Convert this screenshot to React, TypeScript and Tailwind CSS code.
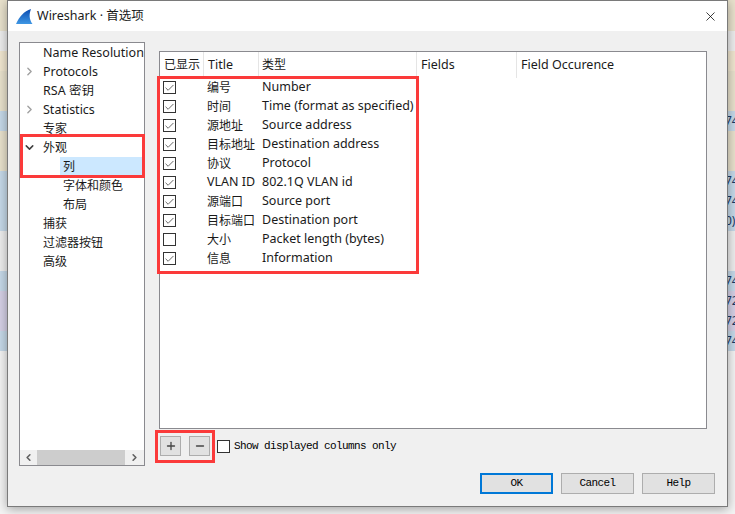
import React from "react";
import { ChevronDown, ChevronLeft, ChevronRight, Minus, Plus, X, Check } from "lucide-react";

const bands = [
  { h: "h-[31px]", bg: "bg-[#e9e2cd]", text: "" },
  { h: "h-[20px]", bg: "bg-[#eeeeee]", text: "" },
  { h: "h-[20px]", bg: "bg-[#f1e7d0]", text: "" },
  { h: "h-[40px]", bg: "bg-[#e9e2cd]", text: "" },
  { h: "h-[20px]", bg: "bg-[#c6d9e9]", text: "74" },
  { h: "h-[40px]", bg: "bg-[#e9e2cd]", text: "" },
  { h: "h-[20px]", bg: "bg-[#c6d9e9]", text: "74" },
  { h: "h-[20px]", bg: "bg-[#c6d9e9]", text: "74" },
  { h: "h-[20px]", bg: "bg-[#c6d9e9]", text: "0)" },
  { h: "h-[40px]", bg: "bg-[#eeeeee]", text: "" },
  { h: "h-[20px]", bg: "bg-[#c6d9e9]", text: "74" },
  { h: "h-[20px]", bg: "bg-[#d5d0e6]", text: "72" },
  { h: "h-[20px]", bg: "bg-[#d5d0e6]", text: "72" },
  { h: "h-[20px]", bg: "bg-[#c6d9e9]", text: "74" },
  { h: "h-[163px]", bg: "bg-[#f4f4f4]", text: "" },
];

const tree = [
  { label: "Name Resolution", level: 0 },
  { label: "Protocols", level: 0, arrow: "right" },
  { label: "RSA 密钥", level: 0 },
  { label: "Statistics", level: 0, arrow: "right" },
  { label: "专家", level: 0 },
  { label: "外观", level: 0, arrow: "down" },
  { label: "列", level: 1, selected: true },
  { label: "字体和颜色", level: 1 },
  { label: "布局", level: 1 },
  { label: "捕获", level: 0 },
  { label: "过滤器按钮", level: 0 },
  { label: "高级", level: 0 },
];

const columns = [
  { shown: true, title: "编号", type: "Number" },
  { shown: true, title: "时间", type: "Time (format as specified)" },
  { shown: true, title: "源地址", type: "Source address" },
  { shown: true, title: "目标地址", type: "Destination address" },
  { shown: true, title: "协议", type: "Protocol" },
  { shown: true, title: "VLAN ID", type: "802.1Q VLAN id" },
  { shown: true, title: "源端口", type: "Source port" },
  { shown: true, title: "目标端口", type: "Destination port" },
  { shown: false, title: "大小", type: "Packet length (bytes)" },
  { shown: true, title: "信息", type: "Information" },
];

// the chinese labels sit at 12px in the dialog, latin ones run slightly wider
const sizeOf = (s: string) => (/^[^\x00-\x7f]+$/.test(s) ? "text-[12px]" : "");

function CheckBox({ checked }: { checked: boolean }) {
  return (
    <span className="w-[13px] h-[13px] border border-[#333333] bg-white flex items-center justify-center">
      {checked && <Check size={12} strokeWidth={1.8} className="text-[#484848]" />}
    </span>
  );
}

function SharkFin() {
  return (
    <svg width="17" height="15" viewBox="0 0 17 15" className="shrink-0">
      <defs>
        <linearGradient id="fin" x1="0" y1="0" x2="0" y2="1">
          <stop offset="0" stopColor="#0a4bb0" />
          <stop offset="1" stopColor="#3f97e4" />
        </linearGradient>
      </defs>
      <path d="M0 15 C3 8 8 2 15 0 C13 5 13 10 16.5 15 Z" fill="url(#fin)" />
    </svg>
  );
}

function DialogButton({ label, primary }: { label: string; primary?: boolean }) {
  return (
    <button
      className={`w-[73px] h-[21px] bg-[#e1e1e1] flex items-center justify-center font-['Liberation_Mono',monospace] text-[11px] tracking-[-0.6px] text-black ${
        primary ? "border-2 border-[#0078d7]" : "border border-[#adadad]"
      }`}
    >
      {label}
    </button>
  );
}

export default function App() {
  return (
    <div className="relative w-[735px] h-[514px] overflow-hidden font-['Noto_Sans','Noto_Sans_CJK_SC',sans-serif] text-[12.5px] text-[#1a1a1a]">
      {/* things behind the dialog */}
      <div className="flex flex-col">
        {bands.map((b, i) => (
          <div
            key={i}
            className={`${b.h} ${b.bg} pl-[725px] text-[12px] leading-[20px] text-[#1c3a66] whitespace-nowrap overflow-hidden`}
          >
            {b.text}
          </div>
        ))}
      </div>

      {/* dialog */}
      <div className="absolute left-[7px] top-0 w-[721px] h-[507px] border border-[#7a7a7a] bg-[#f0f0f0] shadow-[0_2px_10px_rgba(0,0,0,0.35)] flex flex-col">
        <div className="h-[30px] bg-white flex items-center pl-[8px] pr-[9px] shrink-0">
          <SharkFin />
          <span className="ml-[4px] text-[12.5px]">Wireshark · 首选项</span>
          <X size={15} strokeWidth={1.2} className="ml-auto text-black" />
        </div>

        <div className="flex pl-[11px] pt-[11px]">
          {/* tree */}
          <div className="w-[126px] h-[424px] border border-[#8a8a8f] bg-white flex flex-col justify-between shrink-0">
            <div>
              {tree.map((t) => (
                <div
                  key={t.label}
                  className={`h-[19px] flex items-center whitespace-nowrap overflow-hidden ${t.level ? "pl-[43px]" : "pl-[23px]"}`}
                >
                  {t.arrow === "right" && (
                    <ChevronRight size={13} strokeWidth={2.6} className="-ml-[20px] mr-[7px] text-[#a0a0a0]" />
                  )}
                  {t.arrow === "down" && (
                    <ChevronDown size={13} strokeWidth={2.8} className="-ml-[20px] mr-[7px] text-[#404040]" />
                  )}
                  <span
                    className={`h-[19px] leading-[19px] ${sizeOf(t.label)} ${
                      t.selected ? "bg-[#cce8ff] w-[83px] pl-[3px] -ml-[3px]" : ""
                    }`}
                  >
                    {t.label}
                  </span>
                </div>
              ))}
            </div>
            <div className="h-[15px] bg-[#f0f0f0] flex items-center">
              <span className="w-[17px] flex justify-center">
                <ChevronLeft size={11} strokeWidth={3.5} className="text-[#606060]" />
              </span>
              <span className="w-[88px] h-[15px] bg-[#cdcdcd]" />
              <span className="w-[19px] flex justify-center">
                <ChevronRight size={11} strokeWidth={3.5} className="text-[#606060]" />
              </span>
            </div>
          </div>

          {/* columns */}
          <div className="ml-[14px] mt-[9px] flex flex-col">
            <div className="w-[548px] h-[378px] border border-[#8a8a8f] bg-white">
              <div className="h-[26px] flex items-center">
                <div className="w-[44px] h-full flex items-center pl-[4px] text-[12px] border-r border-[#e5e5e5]">已显示</div>
                <div className="w-[55px] h-full flex items-center pl-[4px] border-r border-[#e5e5e5]">Title</div>
                <div className="w-[158px] h-full flex items-center pl-[3px] text-[12px] border-r border-[#e5e5e5]">类型</div>
                <div className="w-[100px] h-full flex items-center pl-[4px] border-r border-[#e5e5e5]">Fields</div>
                <div className="pl-[4px]">Field Occurence</div>
              </div>
              {columns.map((c) => (
                <div key={c.type} className="h-[19px] flex items-center">
                  <div className="w-[44px] pl-[3px] flex items-center">
                    <CheckBox checked={c.shown} />
                  </div>
                  <div className={`w-[55px] pl-[3px] whitespace-nowrap ${sizeOf(c.title)}`}>{c.title}</div>
                  <div className="pl-[3px] whitespace-nowrap">{c.type}</div>
                </div>
              ))}
            </div>
            <div className="mt-[7px] h-[20px] flex items-center">
              <button className="ml-[1px] w-[21px] h-[20px] bg-[#e1e1e1] border border-[#adadad] flex items-center justify-center">
                <Plus size={12} strokeWidth={2.6} className="text-[#444444]" />
              </button>
              <button className="ml-[8px] w-[21px] h-[20px] bg-[#e1e1e1] border border-[#adadad] flex items-center justify-center">
                <Minus size={12} strokeWidth={2.6} className="text-[#444444]" />
              </button>
              <span className="ml-[7px]">
                <CheckBox checked={false} />
              </span>
              <span className="ml-[4px] font-['Liberation_Mono',monospace] text-[11px] tracking-[-0.6px] text-black">
                Show displayed columns only
              </span>
            </div>
          </div>
        </div>

        <div className="mt-[7px] pr-[12px] flex justify-end gap-[8px]">
          <DialogButton label="OK" primary />
          <DialogButton label="Cancel" />
          <DialogButton label="Help" />
        </div>
      </div>

      {/* red marks drawn over the screenshot */}
      <div className="absolute left-[20px] top-[134px] w-[125px] h-[44px] border-[3px] border-[#fb3a3a]" />
      <div className="absolute left-[157px] top-[76px] w-[262px] h-[198px] border-[3px] border-[#fb3a3a]" />
      <div className="absolute left-[155px] top-[430px] w-[60px] h-[33px] border-[3px] border-[#fb3a3a]" />
    </div>
  );
}
